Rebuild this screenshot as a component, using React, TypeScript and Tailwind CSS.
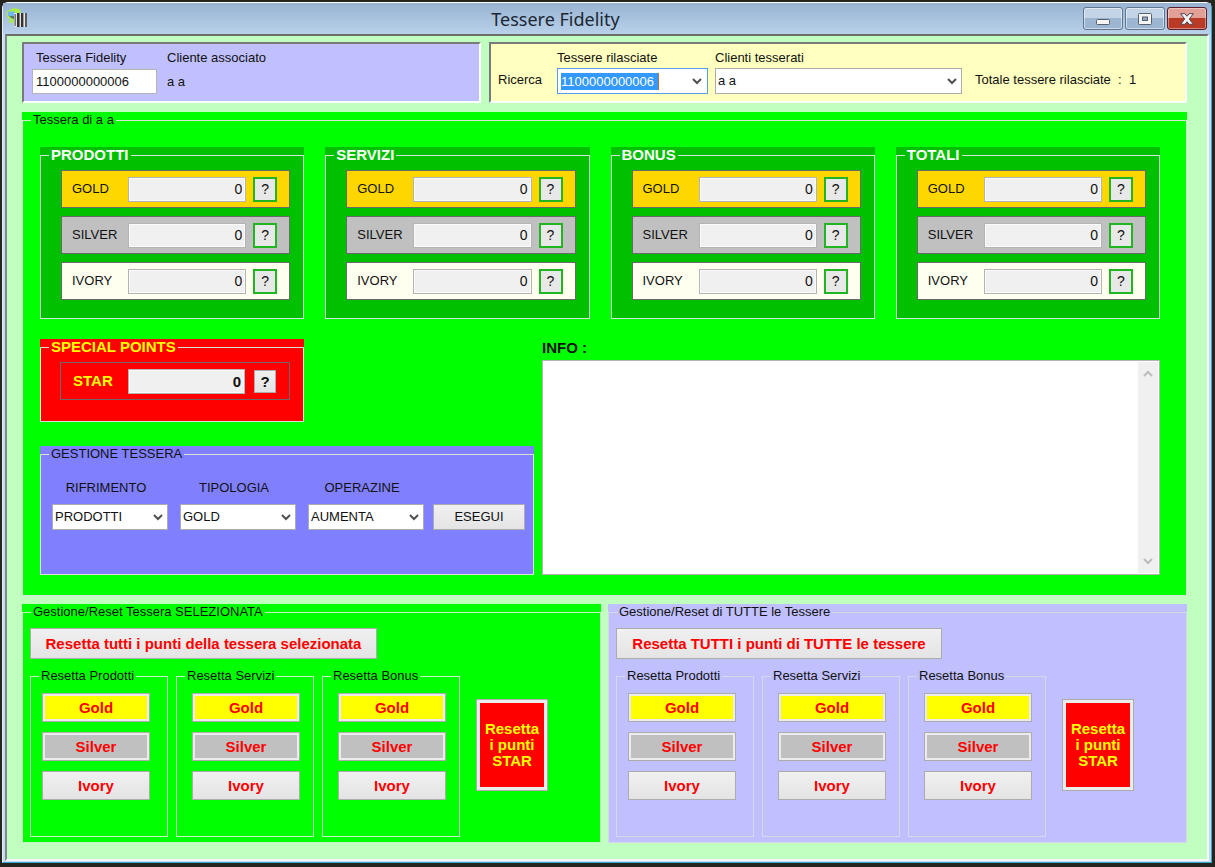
import React from "react";

type Tier = { name: string; bg: string };

const TIERS: Tier[] = [
  { name: "GOLD", bg: "bg-[#ffd700]" },
  { name: "SILVER", bg: "bg-[#c0c0c0]" },
  { name: "IVORY", bg: "bg-[#fffff0]" },
];

const FACE = "border border-[#acacac] bg-linear-to-b from-[#f0f0f0] to-[#e4e4e4]";

function Group({
  title,
  bg,
  legend = "",
  line = "border-[#d8e4d8]",
  className = "",
  children,
}: {
  title: string;
  bg: string;
  legend?: string;
  line?: string;
  className?: string;
  children: React.ReactNode;
}) {
  return (
    <div className={`min-w-0 ${bg}`}>
      <fieldset className={`min-w-0 border ${line}`}>
        <legend className={`ml-2 h-4 px-[2px] leading-4 whitespace-nowrap ${legend}`}>{title}</legend>
        <div className={className}>{children}</div>
      </fieldset>
    </div>
  );
}

function Chevron({ up = false, color = "#505050" }: { up?: boolean; color?: string }) {
  return (
    <svg width="10" height="8" viewBox="0 0 10 8" aria-hidden="true">
      <path
        d={up ? "M1 6 L5 2 L9 6" : "M1 2 L5 6 L9 2"}
        fill="none"
        stroke={color}
        strokeWidth="2"
      />
    </svg>
  );
}

function Combo({ id, value, label }: { id: string; value: string; label?: string }) {
  return (
    <div className="grid w-full items-center">
      <select
        id={id}
        aria-label={label}
        className="col-start-1 row-start-1 h-[26px] w-full appearance-none border border-[#acacac] bg-white pr-5 pb-px pl-[2px] outline-none"
      >
        <option>{value}</option>
      </select>
      <span className="pointer-events-none col-start-1 row-start-1 mr-[5px] justify-self-end">
        <Chevron />
      </span>
    </div>
  );
}

function PointsRow({ group, tier }: { group: string; tier: Tier }) {
  const id = `${group}-${tier.name}`;
  return (
    <div className={`flex h-[38px] items-center border border-[#696969] pr-3 pl-[10px] ${tier.bg}`}>
      <label htmlFor={id} className="w-14 shrink-0">
        {tier.name}
      </label>
      <input
        id={id}
        readOnly
        defaultValue="0"
        className="h-[25px] min-w-0 flex-1 border border-[#b4b4b4] bg-[#f0f0f0] px-[3px] text-right text-sm ring-1 ring-white/70 outline-none ring-inset"
      />
      <button
        aria-label={`Info ${id}`}
        className="ml-[7px] h-[25px] w-6 shrink-0 border-2 border-[#22b522] bg-[#e8e8e8] text-sm leading-none"
      >
        ?
      </button>
    </div>
  );
}

function PointsGroup({ title }: { title: string }) {
  return (
    <Group
      title={title}
      bg="bg-[#00c000]"
      legend="text-[15px] font-bold text-white"
      className="flex flex-col gap-2 pt-[7px] pr-[13px] pb-[18px] pl-5"
    >
      {TIERS.map((t) => (
        <PointsRow key={t.name} group={title} tier={t} />
      ))}
    </Group>
  );
}

function ResetColumn({ title, pad, line, bg }: { title: string; pad: string; line: string; bg: string }) {
  const btn = "h-[29px] w-[108px] border border-[#acacac] text-[15px] leading-none font-bold text-[#ff0000]";
  return (
    <div className="w-[138px] shrink-0">
      <Group title={title} bg={bg} line={line} className={`flex flex-col gap-[10px] pt-[9px] pb-9 ${pad}`}>
        <button className={`${btn} bg-[#ffff00] ring-2 ring-[#ececec] ring-inset`}>Gold</button>
        <button className={`${btn} bg-[#c0c0c0] ring-2 ring-[#ececec] ring-inset`}>Silver</button>
        <button className={`${btn} bg-linear-to-b from-[#f0f0f0] to-[#e4e4e4]`}>Ivory</button>
      </Group>
    </div>
  );
}

function ResetPanel({
  title,
  action,
  width,
  bg,
  line,
}: {
  title: string;
  action: string;
  width: string;
  bg: string;
  line: string;
}) {
  return (
    <Group title={title} bg={bg} line={line} className="pt-2 pr-2 pb-[5px] pl-[7px]">
      <button className={`h-[31px] text-[15px] font-bold whitespace-nowrap text-[#ff0000] ${width} ${FACE}`}>
        {action}
      </button>
      <div className="mt-[9px] flex items-start gap-2">
        <ResetColumn title="Resetta Prodotti" pad="pl-[11px]" line={line} bg={bg} />
        <ResetColumn title="Resetta Servizi" pad="pl-[15px]" line={line} bg={bg} />
        <ResetColumn title="Resetta Bonus" pad="pl-[15px]" line={line} bg={bg} />
        <button className="mt-[31px] ml-2 h-[92px] w-[72px] shrink-0 border border-[#acacac] bg-[#ff0000] text-[15px] leading-4 font-bold text-[#ffff00] ring-3 ring-[#ececec] ring-inset">
          Resetta
          <br />i punti
          <br />
          STAR
        </button>
      </div>
    </Group>
  );
}

function TitleBar() {
  const btn =
    "flex h-[23px] w-10 items-center justify-center rounded-[3px] border border-[#5f7590] bg-linear-to-b from-[#c3d4e7] from-50% to-[#9cb5d0] to-50% ring-1 ring-white/50 ring-inset";
  return (
    <header className="flex h-[31px] items-center bg-linear-to-b from-[#98b3d2] to-[#b9d1ea] pr-1 pl-1">
      <svg width="21" height="21" viewBox="0 0 21 21" className="shrink-0" aria-hidden="true">
        <path d="M0 3 L4 1.5 L6 0 L12 1 L13.5 3 L13 7 H6 V12 L7 15 L1.5 14.5 L3 11 L0 9 Z" fill="#a9ec45" />
        <path d="M1 3.5 H8 V8 H1 Z" fill="#6fb9ee" />
        <path d="M2 8 H7 V11 L4 10 Z" fill="#5b7a68" />
        <rect x="7" y="5" width="13" height="14" fill="#e4e6e8" />
        <path d="M8.2 6 V18" stroke="#6a6a6a" strokeWidth="1.4" />
        <path d="M11.3 5 V19" stroke="#333" strokeWidth="2.6" />
        <path d="M15.2 5 V19" stroke="#333" strokeWidth="2.4" />
        <path d="M19 5 V19" stroke="#4a4a4a" strokeWidth="1.8" />
      </svg>
      <h1 className="flex-1 text-center font-['Noto_Sans',sans-serif] text-lg leading-6 text-[#1c2733]">
        Tessere Fidelity
      </h1>
      <div className="flex gap-[2px]">
        <button aria-label="Riduci a icona" className={btn}>
          <svg width="14" height="14" viewBox="0 0 14 14">
            <rect x="0.5" y="7.5" width="13" height="5" rx="1" fill="#f4f4f4" stroke="#56606e" />
          </svg>
        </button>
        <button aria-label="Ingrandisci" className={btn}>
          <svg width="14" height="12" viewBox="0 0 14 12">
            <rect x="0.5" y="0.5" width="13" height="11" rx="1" fill="#f4f4f4" stroke="#56606e" />
            <rect x="4.5" y="4" width="5" height="3.5" fill="#8ea6c2" stroke="#56606e" />
          </svg>
        </button>
        <button
          aria-label="Chiudi"
          className="flex h-[23px] w-10 items-center justify-center rounded-[3px] border border-[#5a1f2c] bg-linear-to-b from-[#e2a097] from-45% to-[#b93a25] to-50% ring-1 ring-white/40 ring-inset"
        >
          <svg width="14" height="12" viewBox="0 0 14 12">
            <path
              d="M0.7 0.7 H4.8 L7 3.3 L9.2 0.7 H13.3 L9.3 6 L13.3 11.3 H9.2 L7 8.7 L4.8 11.3 H0.7 L4.7 6 Z"
              fill="#f6f6f6"
              stroke="#4d4550"
            />
          </svg>
        </button>
      </div>
    </header>
  );
}

export default function App() {
  const sunken = "border-2 border-t-[#7a7a7a] border-l-[#7a7a7a] border-r-white border-b-white";
  return (
    <div className="min-h-screen bg-[#26241f] pt-[2px] pr-[3px] pb-1 pl-[2px] font-['Liberation_Sans',Arial,sans-serif] text-[13px] leading-4 text-[#111]">
      <div className="rounded-t-md border border-t-white border-r-[#35a9cc] border-b-[#35a9cc] border-l-[#e4eef8] bg-[#c5daee]">
        <TitleBar />
        <main className="mr-[2px] ml-[2px] border-2 border-t-[#6e6e6e] border-r-[#f4f6f8] border-b-[#f4f6f8] border-l-[#808890] bg-[#c0ffc0] pt-[6px] pr-5 pb-4 pl-[15px]">
          <div className="grid grid-cols-[459fr_698fr] gap-2">
            <section className={`flex h-[61px] gap-[10px] bg-[#c0c0ff] pt-[6px] pl-2 ${sunken}`}>
              <div className="w-[125px]">
                <label htmlFor="card" className="block pl-1">
                  Tessera Fidelity
                </label>
                <input
                  id="card"
                  defaultValue="1100000000006"
                  className="mt-[3px] h-[25px] w-full border border-[#b4b4b4] bg-white px-[3px] outline-none"
                />
              </div>
              <div>
                <p>Cliente associato</p>
                <p className="mt-2">a a</p>
              </div>
            </section>
            <section className={`flex h-[61px] bg-[#ffffc0] pt-[6px] pl-[7px] ${sunken}`}>
              <p className="w-[59px] shrink-0 pt-[22px]">Ricerca</p>
              <div className="w-[151px] shrink-0">
                <label htmlFor="issued" className="block">
                  Tessere rilasciate
                </label>
                <div className="mt-[2px] flex h-[26px] items-center justify-between border border-[#569de5] bg-white pr-[5px] pl-[3px]">
                  <input
                    id="issued"
                    role="combobox"
                    aria-expanded="false"
                    aria-controls="issued"
                    defaultValue="1100000000006"
                    className="h-[17px] w-[98px] border-r border-[#d2691e] bg-[#3399ff] text-white outline-none"
                  />
                  <button aria-label="Apri elenco tessere">
                    <Chevron />
                  </button>
                </div>
              </div>
              <div className="mr-[13px] ml-[7px] w-[247px]">
                <label htmlFor="clients" className="mb-[2px] block">
                  Clienti tesserati
                </label>
                <Combo id="clients" value="a a" />
              </div>
              <p className="pt-[22px] whitespace-pre">Totale tessere rilasciate&nbsp; :&nbsp; 1</p>
            </section>
          </div>

          <div className="mt-[9px]">
            <Group title="Tessera di a a" bg="bg-[#00ff00]" className="pt-[19px] pr-[26px] pb-5 pl-[17px]">
              <div className="grid grid-cols-4 gap-[21px]">
                <PointsGroup title="PRODOTTI" />
                <PointsGroup title="SERVIZI" />
                <PointsGroup title="BONUS" />
                <PointsGroup title="TOTALI" />
              </div>

              <div className="mt-5 grid grid-cols-[494fr_618fr] gap-2">
                <div>
                  <div className="w-[264px]">
                    <Group
                      title="SPECIAL POINTS"
                      bg="bg-[#ff0000]"
                      legend="text-[15px] font-bold text-[#ffff00]"
                      className="pt-[7px] pr-[13px] pb-[21px] pl-[19px]"
                    >
                      <div className="flex h-[38px] items-center border border-[#696969] pr-[13px] pl-3">
                        <label htmlFor="star" className="w-[55px] shrink-0 text-[15px] font-bold text-[#ffff00]">
                          STAR
                        </label>
                        <input
                          id="star"
                          readOnly
                          defaultValue="0"
                          className="h-[25px] min-w-0 flex-1 border border-[#b4b4b4] bg-[#f0f0f0] px-[3px] text-right text-[15px] font-bold ring-1 ring-white/70 outline-none ring-inset"
                        />
                        <button
                          aria-label="Info STAR"
                          className={`ml-[9px] h-[23px] w-[22px] shrink-0 text-[15px] leading-none font-bold ${FACE}`}
                        >
                          ?
                        </button>
                      </div>
                    </Group>
                  </div>
                  <div className="mt-6">
                    <Group
                      title="GESTIONE TESSERA"
                      bg="bg-[#8080ff]"
                      className="flex items-end pt-[18px] pr-2 pb-[44px] pl-[11px]"
                    >
                      <div className="grid flex-1 grid-cols-3 gap-x-3">
                        <label htmlFor="target" className="mb-2 pr-2 text-center">
                          RIFRIMENTO
                        </label>
                        <label htmlFor="kind" className="mb-2 pr-2 text-center">
                          TIPOLOGIA
                        </label>
                        <label htmlFor="op" className="mb-2 pr-2 text-center">
                          OPERAZINE
                        </label>
                        <Combo id="target" value="PRODOTTI" />
                        <Combo id="kind" value="GOLD" />
                        <Combo id="op" value="AUMENTA" />
                      </div>
                      <button className={`ml-[9px] h-[26px] w-[92px] ${FACE}`}>ESEGUI</button>
                    </Group>
                  </div>
                </div>
                <div className="flex flex-col">
                  <label htmlFor="info" className="mb-1 h-[17px] text-[15px] leading-[17px] font-bold">
                    INFO :
                  </label>
                  <div className="flex flex-1 border border-[#b4b4b4] bg-white p-px">
                    <textarea id="info" className="min-w-0 flex-1 resize-none outline-none" />
                    <div className="flex w-5 flex-col justify-between bg-[#f0f0f0] py-2">
                      <button aria-label="Scorri su" className="flex justify-center">
                        <Chevron up color="#bcbcbc" />
                      </button>
                      <button aria-label="Scorri giù" className="flex justify-center">
                        <Chevron color="#bcbcbc" />
                      </button>
                    </div>
                  </div>
                </div>
              </div>
            </Group>
          </div>

          <div className="mt-2 grid grid-cols-2 gap-[7px]">
            <ResetPanel
              title="Gestione/Reset Tessera SELEZIONATA"
              action="Resetta tutti i punti della tessera selezionata"
              width="w-[347px]"
              bg="bg-[#00ff00]"
              line="border-[#c8f0c8]"
            />
            <ResetPanel
              title="Gestione/Reset di TUTTE le Tessere"
              action="Resetta TUTTI i punti di TUTTE le tessere"
              width="w-[326px]"
              bg="bg-[#c0c0ff]"
              line="border-[#d4d8e8]"
            />
          </div>
        </main>
        <div className="h-px" />
      </div>
    </div>
  );
}
